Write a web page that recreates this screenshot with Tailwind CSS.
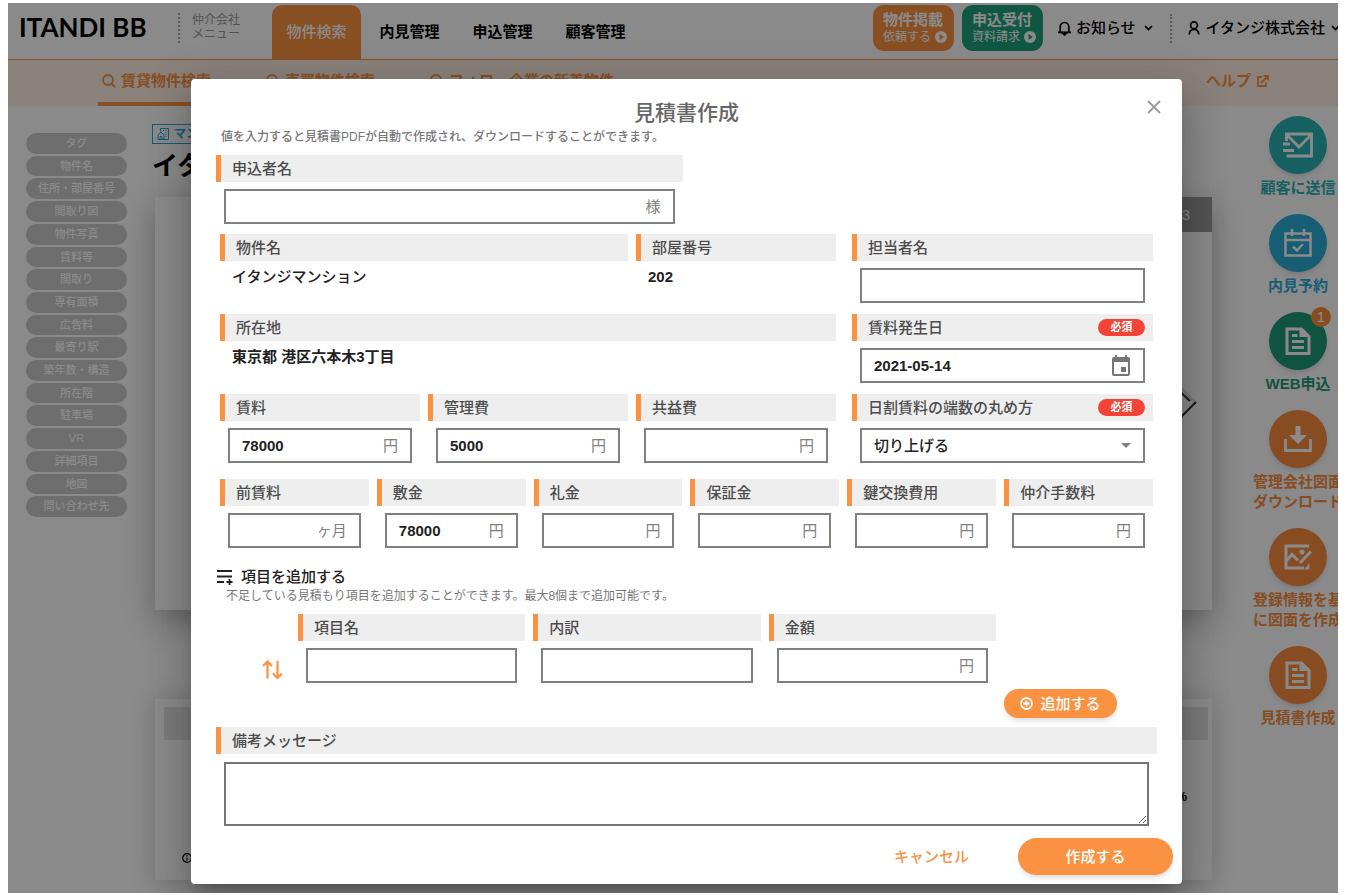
<!DOCTYPE html>
<html lang="ja">
<head>
<meta charset="utf-8">
<meta name="viewport" content="width=device-width, initial-scale=1">
<title>ITANDI BB 見積書作成</title>
<script src="https://cdn.jsdelivr.net/npm/@tailwindcss/browser@4"></script>
</head>
<body class="bg-white font-['Liberation_Sans','Noto_Sans_CJK_JP',sans-serif] text-[15px] leading-5 text-[#222]">
<div class="h-screen pt-[3px] pr-3 pb-[2px] pl-2">
<div class="relative h-full overflow-hidden">
<div class="relative h-full w-[calc(100%+27px)] overflow-hidden bg-white">

  <!-- Global header -->
  <header class="flex h-[57px] border-b border-[#fb9241] pr-[25px] pl-[11px]">
    <a href="#" class="w-[159px] pt-2 font-['Lato',sans-serif] text-[26px] leading-8 font-bold whitespace-nowrap text-black">ITANDI BB</a>
    <a href="#" class="mt-[10px] h-[30px] w-[94px] border-l-2 border-dotted border-[#aaa] pl-3 text-[12px] leading-[14px] text-[#999]">仲介会社<br>メニュー</a>
    <nav class="flex gap-1 pt-[2px] font-bold text-black">
      <a href="#" class="flex w-[89px] items-center justify-center rounded-t-[10px] bg-[#fb9241] font-medium text-white">物件検索</a>
      <a href="#" class="flex w-[89px] items-center justify-center">内見管理</a>
      <a href="#" class="flex w-[89px] items-center justify-center">申込管理</a>
      <a href="#" class="flex w-[89px] items-center justify-center">顧客管理</a>
    </nav>
    <div class="ml-auto flex h-[50px] items-center whitespace-nowrap text-black">
      <a href="#" class="mr-2 h-[46px] w-[81px] rounded-[11px] bg-[#fb9241] pt-[6px] pl-[10px] leading-[18px] font-bold text-white">物件掲載
        <span class="flex items-center gap-1 text-[12px] leading-4 font-normal">依頼する<svg class="size-3" viewBox="0 0 12 12"><circle cx="6" cy="6" r="6" fill="#fff"/><path d="M4.500 3v6L9 6z" fill="#fb9241"/></svg></span></a>
      <a href="#" class="mr-[15px] h-[46px] w-[81px] rounded-[11px] bg-[#1fa37c] pt-[6px] pl-[10px] leading-[18px] font-bold text-white">申込受付
        <span class="flex items-center gap-1 text-[12px] leading-4 font-normal">資料請求<svg class="size-3" viewBox="0 0 12 12"><circle cx="6" cy="6" r="6" fill="#fff"/><path d="M4.500 3v6L9 6z" fill="#1fa37c"/></svg></span></a>
      <button type="button" class="flex items-center font-medium"><svg class="mr-[5px] h-4 w-[13px]" viewBox="0 0 13 16" fill="none" stroke="currentColor" stroke-width="1.700"><path d="M2.200 12V6.800a4.300 4.300 0 0 1 8.600 0V12M0 12.300h13"/><path d="M4.700 13.300h3.600L6.500 15z" fill="currentColor"/></svg>お知らせ<svg class="ml-2 h-2 w-[9px]" viewBox="0 0 9 8" fill="none" stroke="currentColor" stroke-width="1.700"><path d="M1 2l3.500 3.500L8 2"/></svg></button>
      <span class="mr-4 ml-[17px] h-[29px] border-l-2 border-dotted border-[#aaa]"></span>
      <button type="button" class="flex items-center font-medium"><svg class="mr-[6px] h-[14px] w-3" viewBox="0 0 12 14" fill="none" stroke="currentColor" stroke-width="1.700"><circle cx="6" cy="4.300" r="3.400"/><path d="M1.300 13.600c0-3.400 1.600-5.100 4.700-5.100s4.700 1.700 4.700 5.100"/></svg>イタンジ株式会社<svg class="ml-[6px] h-2 w-[9px]" viewBox="0 0 9 8" fill="none" stroke="currentColor" stroke-width="1.700"><path d="M1 2l3.500 3.500L8 2"/></svg></button>
    </div>
  </header>

  <!-- Search tabs -->
  <nav class="flex h-[46px] gap-[47px] bg-[#ffefe3] pl-[90px] font-bold whitespace-nowrap text-[#fb9241]">
    <a href="#" class="flex items-center gap-[5px] rounded-t border-b-4 border-[#fb9241] px-1"><svg class="size-[14px]" viewBox="0 0 14 14" fill="none" stroke="currentColor" stroke-width="1.800"><circle cx="6" cy="6" r="5"/><path d="M9.500 9.500l3.700 3.700"/></svg>賃貸物件検索</a>
    <a href="#" class="flex items-center gap-[5px] border-b-4 border-transparent px-1"><svg class="size-[14px]" viewBox="0 0 14 14" fill="none" stroke="currentColor" stroke-width="1.800"><circle cx="6" cy="6" r="5"/><path d="M9.500 9.500l3.700 3.700"/></svg>売買物件検索</a>
    <a href="#" class="flex items-center gap-[5px] border-b-4 border-transparent px-1"><svg class="size-[14px]" viewBox="0 0 14 14" fill="none" stroke="currentColor" stroke-width="1.800"><circle cx="6" cy="6" r="5"/><path d="M9.500 9.500l3.700 3.700"/></svg>フォロー企業の新着物件</a>
    <a href="#" class="mr-24 ml-auto flex items-center gap-[6px] border-b-4 border-transparent">ヘルプ<svg class="size-3" viewBox="0 0 12 12" fill="none" stroke="currentColor" stroke-width="1.800"><path d="M5 2H1v9h8V7.500M6.500 1H11v4.500M10.500 1.500L4 8"/></svg></a>
  </nav>

  <main class="flex">
    <!-- Section index -->
    <ul class="mt-[27px] ml-[18px] grid h-96 w-[101px] auto-rows-fr gap-[2px] text-center text-[11px] leading-5 font-medium text-white">
      <li class="rounded-full bg-[#cbcbcb]"><a href="#">タグ</a></li>
      <li class="rounded-full bg-[#cbcbcb]"><a href="#">物件名</a></li>
      <li class="rounded-full bg-[#cbcbcb]"><a href="#">住所・部屋番号</a></li>
      <li class="rounded-full bg-[#cbcbcb]"><a href="#">間取り図</a></li>
      <li class="rounded-full bg-[#cbcbcb]"><a href="#">物件写真</a></li>
      <li class="rounded-full bg-[#cbcbcb]"><a href="#">賃料等</a></li>
      <li class="rounded-full bg-[#cbcbcb]"><a href="#">間取り</a></li>
      <li class="rounded-full bg-[#cbcbcb]"><a href="#">専有面積</a></li>
      <li class="rounded-full bg-[#cbcbcb]"><a href="#">広告料</a></li>
      <li class="rounded-full bg-[#cbcbcb]"><a href="#">最寄り駅</a></li>
      <li class="rounded-full bg-[#cbcbcb]"><a href="#">築年数・構造</a></li>
      <li class="rounded-full bg-[#cbcbcb]"><a href="#">所在階</a></li>
      <li class="rounded-full bg-[#cbcbcb]"><a href="#">駐車場</a></li>
      <li class="rounded-full bg-[#cbcbcb]"><a href="#">VR</a></li>
      <li class="rounded-full bg-[#cbcbcb]"><a href="#">詳細項目</a></li>
      <li class="rounded-full bg-[#cbcbcb]"><a href="#">地図</a></li>
      <li class="rounded-full bg-[#cbcbcb]"><a href="#">問い合わせ先</a></li>
    </ul>

    <!-- Property detail -->
    <div class="mt-[18px] ml-[25px] flex-1">
      <span class="flex h-5 w-24 items-center gap-1 border border-[#2aa5dc] px-1 text-[12px] font-bold text-[#2aa5dc]"><svg class="mr-px size-3" viewBox="0 0 12 12" fill="none" stroke="currentColor"><path d="M1 11.500V7l3-3 3 3v4.500zM3 11.500V8.500h2v3M3.500 3.500V.5h8v11H7M6 2.500h1m1.500 0h1m-1 2h1m-1 2h1m-1 2h1"/></svg>マンション</span>
      <h2 class="h-[42px] pt-1 text-[26px] leading-[36px] font-bold text-black">イタンジマンション</h2>
      <section class="relative mt-[11px] ml-[3px] h-[413px] bg-white shadow-[0_10px_30px_rgba(0,0,0,0.3)]">
        <p class="ml-auto h-[35px] w-1/2 bg-[#999] pr-[22px] text-right leading-[36px] text-white">1 / 3</p>
        <svg class="absolute top-[184px] right-[15px] h-11 w-6" viewBox="0 0 24 44" fill="none"><path d="M3 2l20 20" stroke="#ddd" stroke-width="3"/><path d="M23 21L3 41M3 7l14 13" stroke="#333" stroke-width="2"/></svg>
      </section>
      <section class="mt-[89px] ml-[3px] h-[181px] bg-white pt-2 pr-1 pl-[9px] shadow-[0_2px_24px_rgba(0,0,0,0.2)]">
        <div class="h-[33px] bg-[#e4e4e4]"></div>
        <p class="pt-[47px] pr-[21px] text-right text-[13px] font-bold text-black">100%</p>
        <svg class="mt-[46px] ml-[18px] size-[10px]" viewBox="0 0 10 10" fill="none" stroke="#000" stroke-width="1.200"><circle cx="5" cy="5" r="4.300"/><path d="M5 4.500v3M5 2.300v1.100"/></svg>
      </section>
    </div>

    <!-- Actions -->
    <aside class="mt-[10px] mr-[22px] ml-[41px] flex w-[90px] flex-col gap-4 text-center font-bold whitespace-nowrap">
      <a href="#" class="text-[#2cb2b6]"><span class="mx-auto mb-1 flex size-[58px] items-center justify-center rounded-full bg-[#2cb2b6] shadow-md"><svg class="h-[26px] w-8" viewBox="0 0 32 26" fill="none" stroke="#fff" stroke-width="2.800"><path d="M4.500 9V2h25v22h-25M5 3l12 12L29 3M1 12h7M1 18.500h11"/></svg></span>顧客に送信</a>
      <a href="#" class="text-[#2bacd6]"><span class="mx-auto mb-1 flex size-[58px] items-center justify-center rounded-full bg-[#2bacd6] shadow-md"><svg class="size-7" viewBox="0 0 28 28" fill="none" stroke="#fff" stroke-width="2.500"><path d="M1.500 4.500h25v22h-25zM1.500 11h25M8 0v7M20 0v7"/><path d="M9 17.500l4 4 6-6.500"/></svg></span>内見予約</a>
      <a href="#" class="relative text-[#1c9a77]"><span class="mx-auto mb-1 flex size-[58px] items-center justify-center rounded-full bg-[#1c9a77] shadow-md"><svg class="h-7 w-[26px]" viewBox="0 0 26 28" fill="none" stroke="#fff" stroke-width="3"><path d="M2 2h14.500L24 9.500V26.500H2z"/><path d="M14.500 1.500v8.500h9.500L16 2z" fill="#fff" stroke="none"/><path d="M7 8.500h5.500M7 14.500h12M7 20.500h12" stroke-width="2.800"/></svg></span>WEB申込<span class="absolute -top-[5px] right-3 size-5 rounded-full bg-[#fb8d3f] font-normal text-white">1</span></a>
      <a href="#" class="text-[#fb8d3f]"><span class="mx-auto mb-1 flex size-[58px] items-center justify-center rounded-full bg-[#fb8d3f] shadow-md"><svg class="h-[26px] w-7" viewBox="0 0 28 26" fill="none" stroke="#fff" stroke-width="2.800"><path d="M1.500 13v11.500h25V13"/><path d="M11.500 0h5v9H23l-9 9-9-9h6.500z" fill="#fff" stroke="none"/></svg></span>管理会社図面<br>ダウンロード</a>
      <a href="#" class="text-[#fb8d3f]"><span class="mx-auto mb-1 flex size-[58px] items-center justify-center rounded-full bg-[#fb8d3f] shadow-md"><svg class="h-[26px] w-7" viewBox="0 0 28 26" fill="none" stroke="#fff" stroke-width="3"><path d="M25 2H2v22h18M2 17l6-6.500 6 6"/><path d="M27 7.500L16 19" /><path d="M25.500 19v6.500H20z" fill="#fff" stroke="none"/><circle cx="18" cy="8" r="2.500" fill="#fff" stroke="none"/></svg></span>登録情報を基<br>に図面を作成</a>
      <a href="#" class="text-[#fb8d3f]"><span class="mx-auto mb-1 flex size-[58px] items-center justify-center rounded-full bg-[#fb8d3f] shadow-md"><svg class="h-7 w-[26px]" viewBox="0 0 26 28" fill="none" stroke="#fff" stroke-width="3"><path d="M2 2h14.500L24 9.500V26.500H2z"/><path d="M14.500 1.500v8.500h9.500L16 2z" fill="#fff" stroke="none"/><path d="M7 8.500h5.500M7 14.500h12M7 20.500h12" stroke-width="2.800"/></svg></span>見積書作成</a>
    </aside>
  </main>

  <!-- Estimate dialog -->
  <div class="absolute inset-0 flex items-start justify-center bg-black/46 pt-[76px]">
  <form role="dialog" aria-labelledby="dlg-title" class="relative w-full max-w-[991px] rounded bg-white px-[25px] pt-[22px] pb-[9px] shadow-[0_11px_15px_-7px_rgba(0,0,0,0.2),0_24px_38px_3px_rgba(0,0,0,0.14),0_9px_46px_8px_rgba(0,0,0,0.12)]">
    <button type="button" aria-label="閉じる" class="absolute top-[21px] right-[21px] text-[#999]"><svg class="size-[14px]" viewBox="0 0 14 14" fill="none" stroke="currentColor" stroke-width="1.800"><path d="M1 1l12 12M13 1L1 13"/></svg></button>
    <h1 id="dlg-title" class="text-center text-[21px] leading-6 font-medium text-[#666]">見積書作成</h1>
    <p class="mt-1 pl-[5px] text-[12px] leading-4 font-medium text-[#777]">値を入力すると見積書PDFが自動で作成され、ダウンロードすることができます。</p>

    <div class="mt-[10px] grid grid-cols-2 gap-2">
      <div>
        <label for="applicant" class="flex h-[27px] items-center border-l-5 border-[#fb9241] bg-[#eee] pl-[11px] font-medium text-[#4c4c4c]">申込者名</label>
        <div class="mx-2 mt-[7px] flex h-[35px] items-center border-2 border-[#808080] px-3"><input id="applicant" type="text" class="w-full min-w-0 font-bold outline-none"><span class="text-[#808080]">様</span></div>
      </div>
    </div>

    <div class="mx-1 mt-[10px] grid grid-cols-[616fr_301fr] gap-x-4 gap-y-[11px]">
      <div class="grid grid-cols-3 gap-2">
        <div class="col-span-2">
          <h2 class="flex h-[27px] items-center border-l-5 border-[#fb9241] bg-[#eee] pl-[11px] font-medium text-[#4c4c4c]">物件名</h2>
          <p class="mt-[6px] pl-3 font-medium">イタンジマンション</p>
        </div>
        <div>
          <h2 class="flex h-[27px] items-center border-l-5 border-[#fb9241] bg-[#eee] pl-[11px] font-medium text-[#4c4c4c]">部屋番号</h2>
          <p class="mt-[6px] pl-3 font-bold">202</p>
        </div>
      </div>
      <div>
        <label for="staff" class="flex h-[27px] items-center border-l-5 border-[#fb9241] bg-[#eee] pl-[11px] font-medium text-[#4c4c4c]">担当者名</label>
        <div class="mx-2 mt-[7px] flex h-[35px] items-center border-2 border-[#808080] px-3"><input id="staff" type="text" class="w-full min-w-0 font-bold outline-none"></div>
      </div>

      <div>
        <h2 class="flex h-[27px] items-center border-l-5 border-[#fb9241] bg-[#eee] pl-[11px] font-medium text-[#4c4c4c]">所在地</h2>
        <p class="mt-[6px] pl-3 font-bold">東京都 港区六本木3丁目</p>
      </div>
      <div>
        <label for="start" class="flex h-[27px] items-center justify-between border-l-5 border-[#fb9241] bg-[#eee] pr-2 pl-[11px] font-medium text-[#4c4c4c]">賃料発生日<span class="h-[17px] w-[47px] rounded-full bg-[#f44336] text-center text-[11px] leading-[17px] font-bold text-white">必須</span></label>
        <div class="mx-2 mt-[7px] flex h-[35px] items-center border-2 border-[#808080] px-3"><input id="start" type="text" value="2021-05-14" class="w-full min-w-0 font-bold outline-none"><button type="button" aria-label="カレンダー" class="text-[#757575]"><svg class="h-[22px] w-5" viewBox="0 0 20 22" fill="currentColor"><path fill-rule="evenodd" d="M4 0h2v2h8V0h2v2h1a2 2 0 0 1 2 2v15a2 2 0 0 1-2 2H3a2 2 0 0 1-2-2V4a2 2 0 0 1 2-2h1zM3 7v12h14V7zM10 12h5v5h-5z"/></svg></button></div>
      </div>

      <div class="grid grid-cols-3 gap-2">
        <div>
          <label for="rent" class="flex h-[27px] items-center border-l-5 border-[#fb9241] bg-[#eee] pl-[11px] font-medium text-[#4c4c4c]">賃料</label>
          <div class="mx-2 mt-[7px] flex h-[35px] items-center border-2 border-[#808080] px-3"><input id="rent" type="text" value="78000" class="w-full min-w-0 font-bold outline-none"><span class="text-[#808080]">円</span></div>
        </div>
        <div>
          <label for="mgmt" class="flex h-[27px] items-center border-l-5 border-[#fb9241] bg-[#eee] pl-[11px] font-medium text-[#4c4c4c]">管理費</label>
          <div class="mx-2 mt-[7px] flex h-[35px] items-center border-2 border-[#808080] px-3"><input id="mgmt" type="text" value="5000" class="w-full min-w-0 font-bold outline-none"><span class="text-[#808080]">円</span></div>
        </div>
        <div>
          <label for="common" class="flex h-[27px] items-center border-l-5 border-[#fb9241] bg-[#eee] pl-[11px] font-medium text-[#4c4c4c]">共益費</label>
          <div class="mx-2 mt-[7px] flex h-[35px] items-center border-2 border-[#808080] px-3"><input id="common" type="text" class="w-full min-w-0 font-bold outline-none"><span class="text-[#808080]">円</span></div>
        </div>
      </div>
      <div>
        <label for="round" class="flex h-[27px] items-center justify-between border-l-5 border-[#fb9241] bg-[#eee] pr-2 pl-[11px] font-medium text-[#4c4c4c]">日割賃料の端数の丸め方<span class="h-[17px] w-[47px] rounded-full bg-[#f44336] text-center text-[11px] leading-[17px] font-bold text-white">必須</span></label>
        <div class="relative mx-2 mt-[7px]"><select id="round" class="h-[35px] w-full appearance-none border-2 border-[#808080] px-3 font-medium outline-none"><option>切り上げる</option><option>切り捨てる</option></select><svg class="pointer-events-none absolute top-[15px] right-[14px] h-[5px] w-[10px]" viewBox="0 0 10 5" fill="#808080"><path d="M0 0h10L5 5z"/></svg></div>
      </div>
    </div>

    <div class="mx-1 mt-4 grid grid-cols-6 gap-2">
      <div>
        <label for="advance" class="flex h-[27px] items-center border-l-5 border-[#fb9241] bg-[#eee] pl-[11px] font-medium text-[#4c4c4c]">前賃料</label>
        <div class="mx-2 mt-[7px] flex h-[35px] items-center border-2 border-[#808080] px-3"><input id="advance" type="text" class="w-full min-w-0 font-bold outline-none"><span class="whitespace-nowrap text-[#808080]">ヶ月</span></div>
      </div>
      <div>
        <label for="deposit" class="flex h-[27px] items-center border-l-5 border-[#fb9241] bg-[#eee] pl-[11px] font-medium text-[#4c4c4c]">敷金</label>
        <div class="mx-2 mt-[7px] flex h-[35px] items-center border-2 border-[#808080] px-3"><input id="deposit" type="text" value="78000" class="w-full min-w-0 font-bold outline-none"><span class="text-[#808080]">円</span></div>
      </div>
      <div>
        <label for="key" class="flex h-[27px] items-center border-l-5 border-[#fb9241] bg-[#eee] pl-[11px] font-medium text-[#4c4c4c]">礼金</label>
        <div class="mx-2 mt-[7px] flex h-[35px] items-center border-2 border-[#808080] px-3"><input id="key" type="text" class="w-full min-w-0 font-bold outline-none"><span class="text-[#808080]">円</span></div>
      </div>
      <div>
        <label for="guarantee" class="flex h-[27px] items-center border-l-5 border-[#fb9241] bg-[#eee] pl-[11px] font-medium text-[#4c4c4c]">保証金</label>
        <div class="mx-2 mt-[7px] flex h-[35px] items-center border-2 border-[#808080] px-3"><input id="guarantee" type="text" class="w-full min-w-0 font-bold outline-none"><span class="text-[#808080]">円</span></div>
      </div>
      <div>
        <label for="lock" class="flex h-[27px] items-center border-l-5 border-[#fb9241] bg-[#eee] pl-[11px] font-medium text-[#4c4c4c]">鍵交換費用</label>
        <div class="mx-2 mt-[7px] flex h-[35px] items-center border-2 border-[#808080] px-3"><input id="lock" type="text" class="w-full min-w-0 font-bold outline-none"><span class="text-[#808080]">円</span></div>
      </div>
      <div>
        <label for="fee" class="flex h-[27px] items-center border-l-5 border-[#fb9241] bg-[#eee] pl-[11px] font-medium text-[#4c4c4c]">仲介手数料</label>
        <div class="mx-2 mt-[7px] flex h-[35px] items-center border-2 border-[#808080] px-3"><input id="fee" type="text" class="w-full min-w-0 font-bold outline-none"><span class="text-[#808080]">円</span></div>
      </div>
    </div>

    <h2 class="mt-[19px] flex items-center gap-2 font-medium"><svg class="h-[15px] w-[17px]" viewBox="0 0 17 15" fill="none" stroke="#222" stroke-width="1.800"><path d="M1 1h15M1 6.500h15M1 12h7M10.500 12h6M13.500 9v6"/></svg>項目を追加する</h2>
    <p class="mt-px pl-[10px] text-[12px] leading-4 text-[#777]">不足している見積もり項目を追加することができます。最大8個まで追加可能です。</p>

    <div class="mt-[10px] mr-[161px] ml-[46px] flex">
      <button type="button" aria-label="並べ替え" class="mt-[46px] mr-[15px] h-5 text-[#fb9241]"><svg class="h-5 w-[21px]" viewBox="0 0 21 20" fill="none" stroke="currentColor" stroke-width="2.200"><path d="M5.500 18.500V2M1 6l4.500-4.500L10 6M15.500 1v17M11 13.500l4.500 4.500L20 13.500"/></svg></button>
      <div class="grid flex-1 grid-cols-3 gap-2">
        <div>
          <label for="item" class="flex h-[27px] items-center border-l-5 border-[#fb9241] bg-[#eee] pl-[11px] font-medium text-[#4c4c4c]">項目名</label>
          <div class="mx-2 mt-[7px] flex h-[35px] items-center border-2 border-[#808080] px-3"><input id="item" type="text" class="w-full min-w-0 font-bold outline-none"></div>
        </div>
        <div>
          <label for="detail" class="flex h-[27px] items-center border-l-5 border-[#fb9241] bg-[#eee] pl-[11px] font-medium text-[#4c4c4c]">内訳</label>
          <div class="mx-2 mt-[7px] flex h-[35px] items-center border-2 border-[#808080] px-3"><input id="detail" type="text" class="w-full min-w-0 font-bold outline-none"></div>
        </div>
        <div>
          <label for="amount" class="flex h-[27px] items-center border-l-5 border-[#fb9241] bg-[#eee] pl-[11px] font-medium text-[#4c4c4c]">金額</label>
          <div class="mx-2 mt-[7px] flex h-[35px] items-center border-2 border-[#808080] px-3"><input id="amount" type="text" class="w-full min-w-0 font-bold outline-none"><span class="text-[#808080]">円</span></div>
        </div>
      </div>
    </div>

    <button type="button" class="mt-[6px] mr-10 ml-auto flex h-[29px] w-[113px] items-center justify-center gap-[7px] rounded-full bg-[#fb9241] font-medium text-white shadow-md"><svg class="size-[13px]" viewBox="0 0 13 13" fill="none" stroke="currentColor" stroke-width="1.800"><circle cx="6.500" cy="6.500" r="5.500"/><path d="M6.500 3.500v6M3.500 6.500h6"/></svg>追加する</button>

    <label for="memo" class="mt-[9px] flex h-[27px] items-center border-l-5 border-[#fb9241] bg-[#eee] pl-[11px] font-medium text-[#4c4c4c]">備考メッセージ</label>
    <div class="mx-2 mt-2"><textarea id="memo" class="block h-16 w-full border-2 border-[#757575] px-3 py-1 outline-none"></textarea></div>

    <div class="-mr-4 mt-3 flex justify-end">
      <button type="button" class="mr-[49px] font-medium text-[#fb9241]">キャンセル</button>
      <button type="submit" class="h-[37px] w-[155px] rounded-full bg-[#fb9241] font-medium text-white shadow-md">作成する</button>
    </div>
  </form>
  </div>

</div>
</div>
</div>
</body>
</html>
